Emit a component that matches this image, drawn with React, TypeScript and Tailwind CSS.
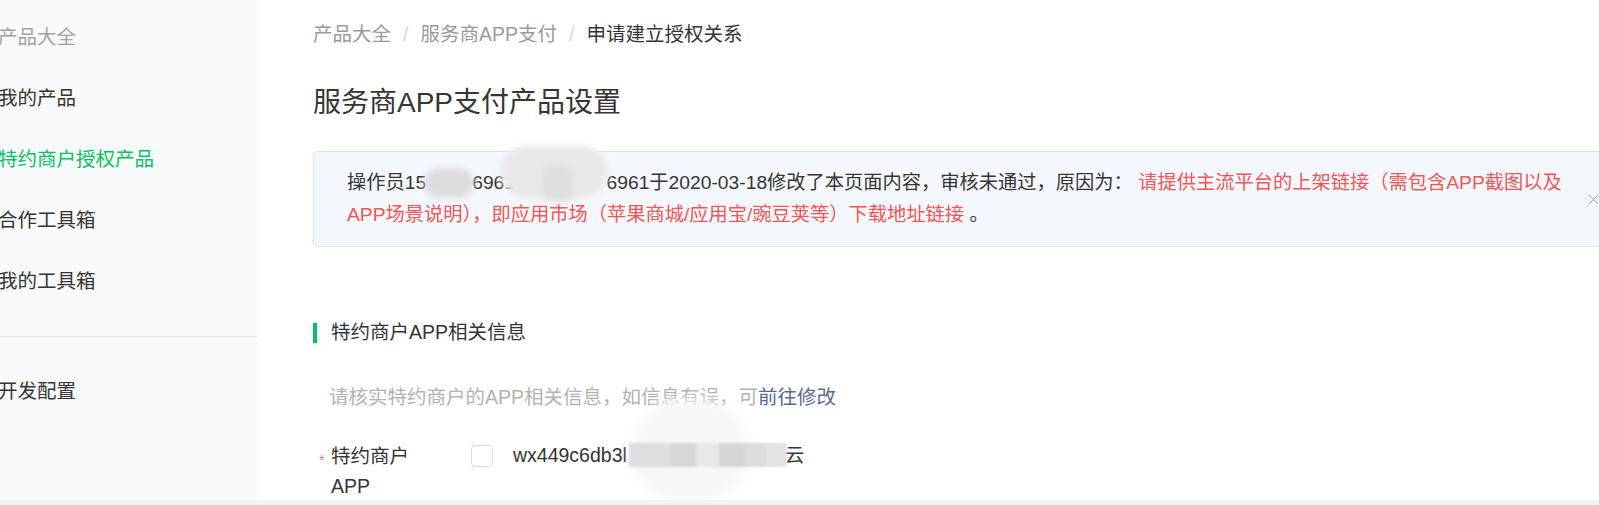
import { X } from 'lucide-react';

const sideItems = [
    { label: '产品大全', tone: 'muted' },
    { label: '我的产品', tone: 'normal' },
    { label: '特约商户授权产品', tone: 'active' },
    { label: '合作工具箱', tone: 'normal' },
    { label: '我的工具箱', tone: 'normal' },
];

function Sidebar() {
    return (
        <aside className="w-[257px] shrink-0 bg-[#f8f9fb] pt-[7px]">
            {sideItems.map((item) => (
                <div
                    key={item.label}
                    className={
                        'h-[61px] flex items-center ml-[-2px] text-[19.5px] whitespace-nowrap ' +
                        (item.tone === 'muted'
                            ? 'text-[#a3a3a3]'
                            : item.tone === 'active'
                              ? 'text-[#07c160]'
                              : 'text-[#353535]')
                    }
                >
                    {item.label}
                </div>
            ))}
            <div className="mt-[24px] h-px bg-[#e4e5e7]" />
            <div className="mt-[24px] h-[61px] flex items-center ml-[-2px] text-[19.5px] text-[#353535]">开发配置</div>
        </aside>
    );
}

function Breadcrumb() {
    return (
        <div className="h-[30px] flex items-center text-[19.5px] whitespace-nowrap">
            <span className="text-[#9a9a9a]">产品大全</span>
            <span className="mx-[12px] text-[#d6d6d6]">/</span>
            <span className="text-[#9a9a9a]">服务商APP支付</span>
            <span className="mx-[12px] text-[#d6d6d6]">/</span>
            <span className="text-[#353535]">申请建立授权关系</span>
        </div>
    );
}

function Alert() {
    return (
        <div className="relative mt-[28px] w-[1312px] h-[96px] flex items-center rounded-[4px] border border-[#d6e4f3] bg-[#f4f8fd] pl-[33px] pr-[22px]">
            <div className="flex-1 text-[19.25px] leading-[32px] text-[#353535] whitespace-nowrap">
                操作员15<span className="inline-block w-[46px]" />6961@<span className="inline-block w-[72px]" />6961于2020-03-18修改了本页面内容，审核未通过，原因为：
                <span className="text-[#f25555]">
                    {' '}请提供主流平台的上架链接（需包含APP截图以及
                    <br />
                    APP场景说明），即应用市场（苹果商城/应用宝/豌豆荚等）下载地址链接
                </span>{' '}
                。
            </div>
            <X className="w-[17px] h-[17px] text-[#a0a0a0]" strokeWidth={1.3} />
            {/* redaction blobs */}
            <div className="absolute left-[110px] top-[16px] w-[50px] h-[30px] rounded-full bg-[#dcdcde] blur-[3px]" />
            <div className="absolute left-[186px] top-[-6px] w-[108px] h-[52px] rounded-[26px] bg-[#e9e9eb] blur-[3px]" />
            <div className="absolute left-[228px] top-[14px] w-[32px] h-[36px] rounded-[12px] bg-[#dedee0] blur-[3px]" />
        </div>
    );
}

function SectionTitle() {
    return (
        <div className="mt-[74px] h-[24px] flex items-center">
            <div className="w-[4px] h-[20px] bg-[#07c160]" />
            <div className="ml-[14px] text-[19.5px] text-[#353535] whitespace-nowrap">特约商户APP相关信息</div>
        </div>
    );
}

function AppRow() {
    return (
        <div className="relative mt-[28px] flex">
            <div className="w-[18px] pl-[6px] pt-[8px] text-[15px] leading-[22px] text-[#f27b7b]">*</div>
            <div className="w-[104px] text-[19.5px] leading-[30px] text-[#353535]">特约商户APP</div>
            <div className="ml-[36px] h-[30px] flex items-center">
                <div className="w-[22px] h-[22px] rounded-[4px] border border-[#d9d9d9] bg-white" />
                <div className="ml-[20px] text-[19.5px] text-[#353535] whitespace-nowrap">
                    wx449c6db3l<span className="inline-block w-[158px]" />云
                </div>
            </div>
            {/* redaction */}
            <div className="absolute left-[318px] top-[-42px] w-[118px] h-[104px] rounded-full bg-[#f7f7f9] blur-[6px]" />
            <div className="absolute left-[316px] top-[2px] w-[158px] h-[24px] flex blur-[1px]">
                <div className="w-[42px] bg-[#dedede]" />
                <div className="w-[25px] bg-[#d8d8d8]" />
                <div className="w-[23px] bg-[#e8e8e8]" />
                <div className="w-[25px] bg-[#d6d6d6]" />
                <div className="w-[23px] bg-[#dcdcdc]" />
                <div className="w-[20px] bg-[#e3e3e3]" />
            </div>
        </div>
    );
}

export default function App() {
    return (
        <div className="w-[1599px] h-[505px] overflow-hidden flex flex-col bg-white font-['Liberation_Sans','Noto_Sans_CJK_SC',sans-serif]">
            <div className="h-[500px] flex">
                <Sidebar />
                <main className="flex-1 pl-[56px] pt-[20px] overflow-hidden">
                    <Breadcrumb />
                    <h1 className="mt-[33px] h-[40px] flex items-center text-[28px] font-normal text-[#353535] whitespace-nowrap">
                        服务商APP支付产品设置
                    </h1>
                    <Alert />
                    <SectionTitle />
                    <div className="mt-[38px] pl-[16px] h-[30px] flex items-center text-[19.5px] text-[#b2b2b2] whitespace-nowrap">
                        请核实特约商户的APP相关信息，如信息有误，可<span className="text-[#576b95]">前往修改</span>
                    </div>
                    <AppRow />
                </main>
            </div>
            <div className="h-[5px] bg-[#f2f3f5]" />
        </div>
    );
}
